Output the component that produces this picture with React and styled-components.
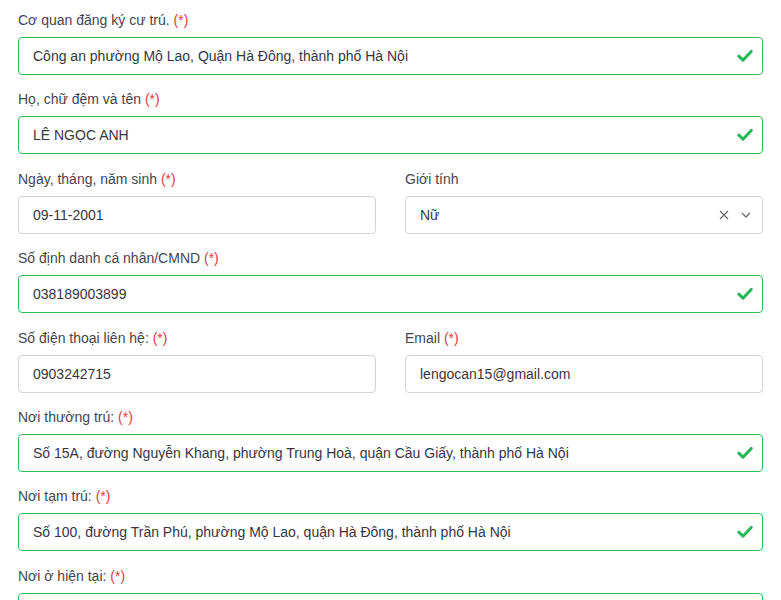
import React from "react";
import styled, { createGlobalStyle } from "styled-components";

const GlobalStyle = createGlobalStyle`
  body {
    margin: 0;
    background: #ffffff;
    font-family: "Liberation Sans", Arial, sans-serif;
  }
`;

const Form = styled.form`
  padding: 10px 18px 0;
`;

const Row = styled.div`
  display: grid;
  grid-template-columns: 1fr 1fr;
  column-gap: 29px;
`;

const Field = styled.div`
  display: flex;
  flex-direction: column;
  margin-bottom: 14.4px;
`;

const Label = styled.label`
  font-size: 14px;
  line-height: 20px;
  color: #45454f;
  margin-bottom: 7px;
`;

const Required = styled.span`
  color: #e5393c;
`;

const Box = styled.div`
  position: relative;
  display: flex;
  align-items: center;
  height: 38px;
  box-sizing: border-box;
  padding: 0 14px;
  border: 1px solid ${(p) => (p.$valid ? "#2fbf5a" : "#d3d3da")};
  border-radius: 4px;
  background: #fff;
`;

const Value = styled.span`
  flex: 1;
  font-size: 14px;
  color: #36363f;
  white-space: nowrap;
  overflow: hidden;
`;

const CheckWrap = styled.span`
  display: flex;
  margin-right: -5px;
`;

const Icons = styled.div`
  display: flex;
  align-items: center;
  gap: 12px;
  margin-right: -3px;
`;

const Check = () => (
  <CheckWrap>
    <svg width="16" height="14" viewBox="0 0 16 14">
      <path
        d="M1.8 7.2 L6 11.2 L14.2 2.4"
        fill="none"
        stroke="#25b856"
        strokeWidth="3"
        strokeLinecap="round"
        strokeLinejoin="round"
      />
    </svg>
  </CheckWrap>
);

const Clear = () => (
  <svg width="10" height="10" viewBox="0 0 10 10">
    <path d="M1 1 L9 9 M9 1 L1 9" stroke="#6b6b74" strokeWidth="1.3" />
  </svg>
);

const Chevron = () => (
  <svg width="10" height="6" viewBox="0 0 10 6">
    <path d="M1 1 L5 5 L9 1" fill="none" stroke="#6b6b74" strokeWidth="1.3" />
  </svg>
);

const Input = ({ label, required, value, valid, select }) => (
  <Field>
    <Label>
      {label}
      {required && <Required> (*)</Required>}
    </Label>
    <Box $valid={valid}>
      <Value>{value}</Value>
      {valid && <Check />}
      {select && (
        <Icons>
          <Clear />
          <Chevron />
        </Icons>
      )}
    </Box>
  </Field>
);

export default function App() {
  return (
    <>
      <GlobalStyle />
      <Form>
        <Input
          label="Cơ quan đăng ký cư trú."
          required
          valid
          value="Công an phường Mộ Lao, Quận Hà Đông, thành phố Hà Nội"
        />
        <Input label="Họ, chữ đệm và tên" required valid value="LÊ NGỌC ANH" />
        <Row>
          <Input label="Ngày, tháng, năm sinh" required value="09-11-2001" />
          <Input label="Giới tính" value="Nữ" select />
        </Row>
        <Input
          label="Số định danh cá nhân/CMND"
          required
          valid
          value="038189003899"
        />
        <Row>
          <Input label="Số điện thoại liên hệ:" required value="0903242715" />
          <Input label="Email" required value="lengocan15@gmail.com" />
        </Row>
        <Input
          label="Nơi thường trú:"
          required
          valid
          value="Số 15A, đường Nguyễn Khang, phường Trung Hoà, quận Cầu Giấy, thành phố Hà Nội"
        />
        <Input
          label="Nơi tạm trú:"
          required
          valid
          value="Số 100, đường Trần Phú, phường Mộ Lao, quận Hà Đông, thành phố Hà Nội"
        />
        <Input label="Nơi ở hiện tại:" required valid value="" />
      </Form>
    </>
  );
}
